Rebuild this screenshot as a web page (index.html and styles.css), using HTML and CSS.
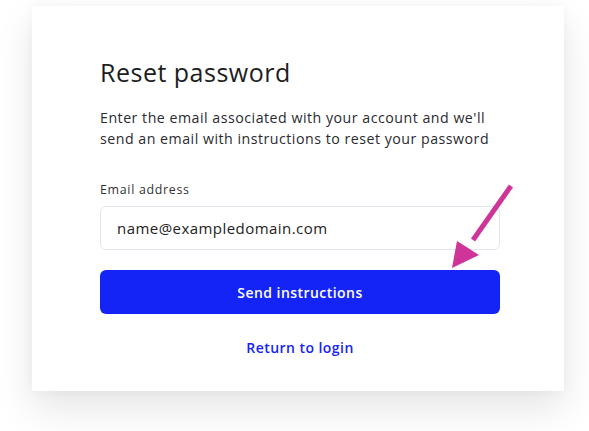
FILE: index.html
```html
<!DOCTYPE html>
<html lang="en">
<head>
<meta charset="utf-8">
<title>Reset password</title>
<link rel="stylesheet" href="styles.css">
</head>
<body>
<div class="page">
  <div class="card">
    <h1 class="title">Reset password</h1>
    <p class="desc">Enter the email associated with your account and we'll send an email with instructions to reset your password</p>
    <form class="form">
      <label class="label" for="email">Email address</label>
      <input class="input" id="email" type="text" value="name@exampledomain.com">
      <button class="btn" type="button">Send instructions</button>
    </form>
    <a class="link" href="#">Return to login</a>
    <svg class="arrow" width="80" height="100" viewBox="0 0 80 100">
      <line x1="74" y1="8" x2="36" y2="62" stroke="#cf3499" stroke-width="5"/>
      <polygon points="15,90 20,63 42,77" fill="#cf3499"/>
    </svg>
  </div>
</div>
</body>
</html>
```
FILE: styles.css
```css
html, body {
  margin: 0;
  padding: 0;
  background: #ffffff;
}
body {
  font-family: "Open Sans", "Liberation Sans", sans-serif;
  color: #222;
  width: 589px;
  height: 431px;
  overflow: hidden;
}
.page {
  padding: 6px 0 0 32px;
}
.card {
  position: relative;
  box-sizing: border-box;
  width: 532px;
  height: 385px;
  background: #fff;
  padding: 50px 64px 0 68px;
  box-shadow: 0 18px 36px rgba(0, 0, 0, 0.10), 0 0 12px rgba(0, 0, 0, 0.04);
}
.title {
  margin: 0;
  font-size: 25px;
  font-weight: 500;
  line-height: 32px;
  color: #1d1d1f;
  letter-spacing: 0.5px;
}
.desc {
  margin: 19px 0 0;
  width: 400px;
  font-size: 14.2px;
  line-height: 21px;
  color: #2a2a2f;
  letter-spacing: 0.5px;
}
.form {
  display: flex;
  flex-direction: column;
  margin-top: 33px;
}
.label {
  font-size: 12.4px;
  line-height: 16px;
  color: #333;
  letter-spacing: 0.7px;
}
.input {
  margin-top: 8px;
  box-sizing: border-box;
  height: 44px;
  width: 400px;
  border: 1px solid #e4e4f1;
  border-radius: 6px;
  padding: 0 16px;
  font-family: inherit;
  font-size: 15px;
  color: #222;
  letter-spacing: 0.45px;
  outline: none;
  background: #fff;
}
.btn {
  margin-top: 20px;
  height: 44px;
  width: 400px;
  border: none;
  border-radius: 6px;
  background: #1524f6;
  color: #fff;
  font-family: inherit;
  font-size: 14px;
  font-weight: 600;
  letter-spacing: 0.45px;
}
.link {
  display: block;
  width: 400px;
  margin-top: 24px;
  text-align: center;
  font-size: 14px;
  font-weight: 600;
  line-height: 20px;
  color: #1524f6;
  text-decoration: none;
  letter-spacing: 0.45px;
}
.arrow {
  position: absolute;
  left: 405px;
  top: 172px;
}
```
